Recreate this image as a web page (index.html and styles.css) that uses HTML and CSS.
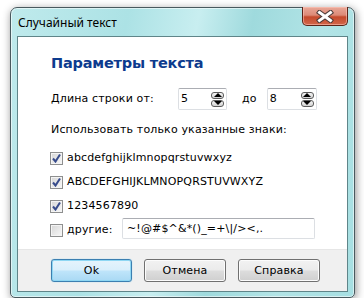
FILE: index.html
```html
<!DOCTYPE html>
<html lang="ru">
<head>
    <meta charset="UTF-8">
    <title>Случайный текст</title>
    <link rel="stylesheet" href="styles.css">
</head>
<body>
<div class="window">
    <div class="titlebar">
        <span class="title">Случайный текст</span>
        <a href="javascript:;" class="close">
            <svg width="18" height="13" viewBox="0 0 18 13">
                <path d="M3.5 2.5 L14.5 10.5 M14.5 2.5 L3.5 10.5" stroke="#4a3a38" stroke-width="5" stroke-linecap="square"/>
                <path d="M3.5 2.5 L14.5 10.5 M14.5 2.5 L3.5 10.5" stroke="#fff" stroke-width="3" stroke-linecap="square"/>
            </svg>
        </a>
    </div>
    <div class="client">
        <div class="main">
            <h1 class="heading">Параметры текста</h1>
            <div class="length-row">
                <span class="label">Длина строки от:</span>
                <div class="spinbox">
                    <span class="value">5</span>
                    <span class="spin"><i class="up"></i><i class="down"></i></span>
                </div>
                <span class="to">до</span>
                <div class="spinbox wide">
                    <span class="value">8</span>
                    <span class="spin"><i class="up"></i><i class="down"></i></span>
                </div>
            </div>
            <p class="hint">Использовать только указанные знаки:</p>
            <ul class="options">
                <li><span class="check on"></span>abcdefghijklmnopqrstuvwxyz</li>
                <li><span class="check on"></span>ABCDEFGHIJKLMNOPQRSTUVWXYZ</li>
                <li><span class="check on"></span>1234567890</li>
                <li><span class="check"></span><span class="other">другие:</span><span class="field">~!@#$^&amp;*()_=+\|/&gt;&lt;,.</span></li>
            </ul>
        </div>
        <div class="footer">
            <a href="javascript:;" class="btn default">Ok</a>
            <a href="javascript:;" class="btn">Отмена</a>
            <a href="javascript:;" class="btn">Справка</a>
        </div>
    </div>
</div>
</body>
</html>
```

FILE: styles.css
```css
body, h1, p, ul, li {
    margin: 0;
    padding: 0;
}

body {
    background: #fff;
    font: 11px/16px "DejaVu Sans", Verdana, sans-serif;
    letter-spacing: 0.15px;
    color: #000;
}

ul {
    list-style: none;
}

a {
    text-decoration: none;
    color: #000;
}

.window {
    width: 345px;
    height: 291px;
    margin: 7px 0 0 10px;
    box-sizing: border-box;
    border: 1px solid #49595e;
    border-radius: 7px 7px 5px 5px;
    padding: 0 6px 6px;
    background: linear-gradient(100deg, #bfeaec 0%, #ace2e5 30%, #c8eef0 48%, #9fdadd 62%, #b2e4e6 80%, #a6dfe2 100%);
    box-shadow: 1px 2px 8px rgba(0, 0, 0, 0.45), inset 0 0 0 1px rgba(255, 255, 255, 0.55);
}

.titlebar {
    height: 28px;
    display: flex;
    justify-content: space-between;
}

.title {
    font: 12px "Noto Sans", "Liberation Sans", sans-serif;
    letter-spacing: 0;
    padding: 6px 0 0 1px;
    color: #000;
}

.close {
    width: 46px;
    height: 19px;
    margin-top: -1px;
    box-sizing: border-box;
    border: 1px solid #5b2418;
    border-top: 0;
    border-radius: 0 0 5px 5px;
    background: linear-gradient(#e9a898 0%, #dc8a77 45%, #c54a2c 55%, #d2664a 100%);
    box-shadow: inset 0 0 0 1px rgba(255, 200, 190, 0.55);
    display: flex;
    align-items: center;
    justify-content: center;
}

.client {
    height: 256px;
    box-sizing: border-box;
    border: 1px solid #5f8589;
    background: #fff;
    display: flex;
    flex-direction: column;
}

.main {
    flex: 1;
    padding: 16px 0 0 33px;
}

.heading {
    font: bold 14.5px/20px "DejaVu Sans", Verdana, sans-serif;
    letter-spacing: -0.2px;
    color: #0d3b8e;
}

.length-row {
    display: flex;
    align-items: center;
    height: 22px;
    margin-top: 15px;
}

.label {
    width: 127px;
}

.spinbox {
    width: 49px;
    height: 22px;
    box-sizing: border-box;
    border: 1px solid #dcdfe3;
    border-top-color: #abadb3;
    border-radius: 2px;
    display: flex;
    align-items: center;
    justify-content: space-between;
    padding: 0 2px 0 2px;
}

.spinbox.wide {
    width: 50px;
}

.to {
    margin: 0 10px 0 15px;
}

.spin {
    display: flex;
    flex-direction: column;
    gap: 1px;
}

.spin i {
    width: 13px;
    height: 7px;
    box-sizing: border-box;
    border: 1px solid #5c5c5c;
    border-radius: 3px;
    background: linear-gradient(#f6f6f6, #d2d2d2);
    display: flex;
    align-items: center;
    justify-content: center;
}

.spin i::after {
    content: "";
    width: 0;
    height: 0;
    border-left: 4px solid transparent;
    border-right: 4px solid transparent;
}

.spin .up::after {
    border-bottom: 4px solid #000;
}

.spin .down::after {
    border-top: 4px solid #000;
}

.hint {
    margin-top: 12px;
}

.options {
    margin-top: 8px;
}

.options li {
    height: 24px;
    display: flex;
    align-items: center;
}

.check {
    width: 13px;
    height: 13px;
    box-sizing: border-box;
    margin: 0 4px 0 -1px;
    border: 1px solid #8e8f8f;
    background: linear-gradient(135deg, #d6d6d6, #f8f8f8);
    box-shadow: inset 0 0 0 1px #f4f4f4;
}

.check.on {
    background: url("data:image/svg+xml,%3Csvg xmlns='http://www.w3.org/2000/svg' width='11' height='11'%3E%3Cpath d='M2 5.5 L4.5 8.5 L9 1.5' fill='none' stroke='%23384c8c' stroke-width='2'/%3E%3C/svg%3E") center no-repeat, linear-gradient(135deg, #d6d6d6, #f8f8f8);
}

.other {
    width: 55px;
}

.field {
    width: 193px;
    height: 21px;
    box-sizing: border-box;
    border: 1px solid #dcdfe3;
    border-top-color: #abadb3;
    border-radius: 2px;
    padding: 2px 4px;
    line-height: 16px;
    margin-top: -3px;
}

.footer {
    height: 42px;
    box-sizing: border-box;
    background: #f0f0f0;
    border-top: 1px solid #e6e6e6;
    display: flex;
    gap: 12px;
    padding: 9px 0 0 33px;
}

.btn {
    width: 82px;
    height: 23px;
    box-sizing: border-box;
    border: 1px solid #707070;
    border-radius: 3px;
    background: linear-gradient(#f2f2f2 0%, #ebebeb 48%, #dddddd 52%, #cfcfcf 100%);
    box-shadow: inset 0 0 0 1px #fcfcfc;
    text-align: center;
    line-height: 21px;
}

.btn.default {
    width: 81px;
    border-color: #3c7fb1;
    background: linear-gradient(#e5f4fc 0%, #d9effb 48%, #bfe5fa 52%, #a9d9f4 100%);
    box-shadow: inset 0 0 0 1px #8ed7f3, 0 0 1px #6cc7ec;
}
```
